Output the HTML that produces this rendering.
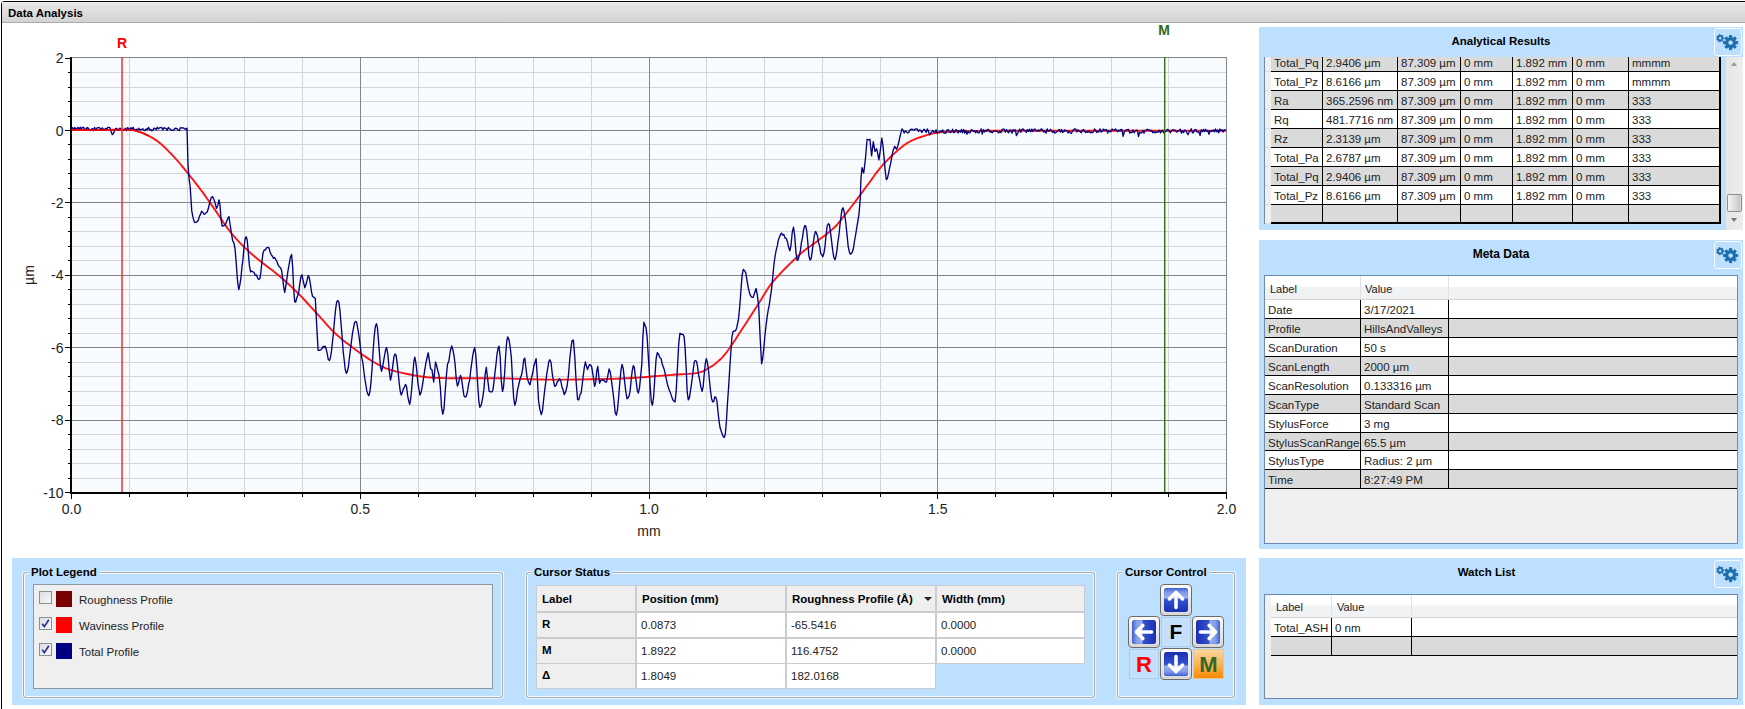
<!DOCTYPE html><html><head><meta charset="utf-8"><style>
*{box-sizing:border-box}
body{margin:0;width:1745px;height:709px;overflow:hidden;background:#fff;position:relative;font-family:"Liberation Sans",sans-serif;color:#1e1e1e}
.a{position:absolute}
.t{position:absolute;white-space:nowrap}
.panel{position:absolute;background:#bee0ff}
.ptitle{position:absolute;font-weight:bold;font-size:11.5px;color:#000;white-space:nowrap}
.gear{position:absolute;width:28px;height:28px;border:1px solid rgba(255,255,255,0.85);border-radius:3px}
.tbl{position:absolute;background:#efefef;border:1px solid #6a8cb3;overflow:hidden}
.row{position:absolute;height:19px;border-bottom:1px solid #000;}
.cell{position:absolute;top:0;height:18px;border-right:1px solid #000;font-size:11.5px;line-height:18px;padding-top:1px;padding-left:3px;white-space:nowrap;color:#222}
.gb{position:absolute;border:1px solid #a3a8ad;border-radius:3px;box-shadow:inset 0 0 0 1px rgba(255,255,255,0.9), 0 0 0 1px rgba(255,255,255,0.7)}
.gbt{position:absolute;font-weight:bold;font-size:11.5px;color:#000;background:#bee0ff;padding:0 3px;white-space:nowrap;line-height:14px}
.cs{position:absolute;background:#fff;border:1px solid #c9ccd0;font-size:11.5px;line-height:24px;padding-left:4px;white-space:nowrap;color:#222}
.csh{background:#efefef;font-weight:bold;font-size:11.5px;color:#000}
</style></head><body>
<div class="a" style="left:1px;top:1px;width:1760px;height:720px;border:1px solid #000;border-radius:3px 3px 0 0"></div>
<div class="a" style="left:2px;top:2px;width:1743px;height:21px;background:linear-gradient(#f2f2f2 0px,#e6e6e6 2px,#d3d3d3 20px);border-bottom:1px solid #ababab"></div>
<div class="t" style="left:8px;top:6px;font-weight:bold;font-size:11.5px;color:#000;line-height:14px">Data Analysis</div>
<svg width="1250" height="530" viewBox="0 0 1250 530" style="position:absolute;left:0;top:0" shape-rendering="crispEdges">
<rect x="71" y="57" width="1156" height="435" fill="#f8fbfe"/>
<line x1="71" x2="1226" y1="72.5" y2="72.5" stroke="#d4d4d4" stroke-width="1"/>
<line x1="71" x2="1226" y1="87.5" y2="87.5" stroke="#d4d4d4" stroke-width="1"/>
<line x1="71" x2="1226" y1="101.5" y2="101.5" stroke="#d4d4d4" stroke-width="1"/>
<line x1="71" x2="1226" y1="116.5" y2="116.5" stroke="#d4d4d4" stroke-width="1"/>
<line x1="71" x2="1226" y1="144.5" y2="144.5" stroke="#d4d4d4" stroke-width="1"/>
<line x1="71" x2="1226" y1="159.5" y2="159.5" stroke="#d4d4d4" stroke-width="1"/>
<line x1="71" x2="1226" y1="173.5" y2="173.5" stroke="#d4d4d4" stroke-width="1"/>
<line x1="71" x2="1226" y1="188.5" y2="188.5" stroke="#d4d4d4" stroke-width="1"/>
<line x1="71" x2="1226" y1="217.5" y2="217.5" stroke="#d4d4d4" stroke-width="1"/>
<line x1="71" x2="1226" y1="231.5" y2="231.5" stroke="#d4d4d4" stroke-width="1"/>
<line x1="71" x2="1226" y1="246.5" y2="246.5" stroke="#d4d4d4" stroke-width="1"/>
<line x1="71" x2="1226" y1="260.5" y2="260.5" stroke="#d4d4d4" stroke-width="1"/>
<line x1="71" x2="1226" y1="289.5" y2="289.5" stroke="#d4d4d4" stroke-width="1"/>
<line x1="71" x2="1226" y1="304.5" y2="304.5" stroke="#d4d4d4" stroke-width="1"/>
<line x1="71" x2="1226" y1="318.5" y2="318.5" stroke="#d4d4d4" stroke-width="1"/>
<line x1="71" x2="1226" y1="333.5" y2="333.5" stroke="#d4d4d4" stroke-width="1"/>
<line x1="71" x2="1226" y1="362.5" y2="362.5" stroke="#d4d4d4" stroke-width="1"/>
<line x1="71" x2="1226" y1="376.5" y2="376.5" stroke="#d4d4d4" stroke-width="1"/>
<line x1="71" x2="1226" y1="391.5" y2="391.5" stroke="#d4d4d4" stroke-width="1"/>
<line x1="71" x2="1226" y1="405.5" y2="405.5" stroke="#d4d4d4" stroke-width="1"/>
<line x1="71" x2="1226" y1="434.5" y2="434.5" stroke="#d4d4d4" stroke-width="1"/>
<line x1="71" x2="1226" y1="449.5" y2="449.5" stroke="#d4d4d4" stroke-width="1"/>
<line x1="71" x2="1226" y1="463.5" y2="463.5" stroke="#d4d4d4" stroke-width="1"/>
<line x1="71" x2="1226" y1="478.5" y2="478.5" stroke="#d4d4d4" stroke-width="1"/>
<line x1="129.5" x2="129.5" y1="57" y2="492" stroke="#d4d4d4" stroke-width="1"/>
<line x1="187.5" x2="187.5" y1="57" y2="492" stroke="#d4d4d4" stroke-width="1"/>
<line x1="244.5" x2="244.5" y1="57" y2="492" stroke="#d4d4d4" stroke-width="1"/>
<line x1="302.5" x2="302.5" y1="57" y2="492" stroke="#d4d4d4" stroke-width="1"/>
<line x1="418.5" x2="418.5" y1="57" y2="492" stroke="#d4d4d4" stroke-width="1"/>
<line x1="475.5" x2="475.5" y1="57" y2="492" stroke="#d4d4d4" stroke-width="1"/>
<line x1="533.5" x2="533.5" y1="57" y2="492" stroke="#d4d4d4" stroke-width="1"/>
<line x1="591.5" x2="591.5" y1="57" y2="492" stroke="#d4d4d4" stroke-width="1"/>
<line x1="706.5" x2="706.5" y1="57" y2="492" stroke="#d4d4d4" stroke-width="1"/>
<line x1="764.5" x2="764.5" y1="57" y2="492" stroke="#d4d4d4" stroke-width="1"/>
<line x1="822.5" x2="822.5" y1="57" y2="492" stroke="#d4d4d4" stroke-width="1"/>
<line x1="880.5" x2="880.5" y1="57" y2="492" stroke="#d4d4d4" stroke-width="1"/>
<line x1="995.5" x2="995.5" y1="57" y2="492" stroke="#d4d4d4" stroke-width="1"/>
<line x1="1053.5" x2="1053.5" y1="57" y2="492" stroke="#d4d4d4" stroke-width="1"/>
<line x1="1111.5" x2="1111.5" y1="57" y2="492" stroke="#d4d4d4" stroke-width="1"/>
<line x1="1168.5" x2="1168.5" y1="57" y2="492" stroke="#d4d4d4" stroke-width="1"/>
<line x1="71" x2="1226" y1="130.5" y2="130.5" stroke="#858585" stroke-width="1"/>
<line x1="71" x2="1226" y1="202.5" y2="202.5" stroke="#858585" stroke-width="1"/>
<line x1="71" x2="1226" y1="275.5" y2="275.5" stroke="#858585" stroke-width="1"/>
<line x1="71" x2="1226" y1="347.5" y2="347.5" stroke="#858585" stroke-width="1"/>
<line x1="71" x2="1226" y1="420.5" y2="420.5" stroke="#858585" stroke-width="1"/>
<line x1="360.5" x2="360.5" y1="57" y2="492" stroke="#858585" stroke-width="1"/>
<line x1="649.5" x2="649.5" y1="57" y2="492" stroke="#858585" stroke-width="1"/>
<line x1="937.5" x2="937.5" y1="57" y2="492" stroke="#858585" stroke-width="1"/>
<line x1="71" x2="1227" y1="57.5" y2="57.5" stroke="#858585"/>
<line x1="1226.5" x2="1226.5" y1="57" y2="492" stroke="#858585"/>
<rect x="70" y="57" width="2" height="437" fill="#000"/>
<rect x="70" y="492" width="1157" height="2" fill="#000"/>
<line x1="65" x2="70" y1="58.5" y2="58.5" stroke="#000"/>
<line x1="68" x2="70" y1="72.5" y2="72.5" stroke="#000"/>
<line x1="68" x2="70" y1="87.5" y2="87.5" stroke="#000"/>
<line x1="68" x2="70" y1="101.5" y2="101.5" stroke="#000"/>
<line x1="68" x2="70" y1="116.5" y2="116.5" stroke="#000"/>
<line x1="65" x2="70" y1="130.5" y2="130.5" stroke="#000"/>
<line x1="68" x2="70" y1="144.5" y2="144.5" stroke="#000"/>
<line x1="68" x2="70" y1="159.5" y2="159.5" stroke="#000"/>
<line x1="68" x2="70" y1="173.5" y2="173.5" stroke="#000"/>
<line x1="68" x2="70" y1="188.5" y2="188.5" stroke="#000"/>
<line x1="65" x2="70" y1="202.5" y2="202.5" stroke="#000"/>
<line x1="68" x2="70" y1="217.5" y2="217.5" stroke="#000"/>
<line x1="68" x2="70" y1="231.5" y2="231.5" stroke="#000"/>
<line x1="68" x2="70" y1="246.5" y2="246.5" stroke="#000"/>
<line x1="68" x2="70" y1="260.5" y2="260.5" stroke="#000"/>
<line x1="65" x2="70" y1="275.5" y2="275.5" stroke="#000"/>
<line x1="68" x2="70" y1="289.5" y2="289.5" stroke="#000"/>
<line x1="68" x2="70" y1="304.5" y2="304.5" stroke="#000"/>
<line x1="68" x2="70" y1="318.5" y2="318.5" stroke="#000"/>
<line x1="68" x2="70" y1="333.5" y2="333.5" stroke="#000"/>
<line x1="65" x2="70" y1="347.5" y2="347.5" stroke="#000"/>
<line x1="68" x2="70" y1="362.5" y2="362.5" stroke="#000"/>
<line x1="68" x2="70" y1="376.5" y2="376.5" stroke="#000"/>
<line x1="68" x2="70" y1="391.5" y2="391.5" stroke="#000"/>
<line x1="68" x2="70" y1="405.5" y2="405.5" stroke="#000"/>
<line x1="65" x2="70" y1="420.5" y2="420.5" stroke="#000"/>
<line x1="68" x2="70" y1="434.5" y2="434.5" stroke="#000"/>
<line x1="68" x2="70" y1="449.5" y2="449.5" stroke="#000"/>
<line x1="68" x2="70" y1="463.5" y2="463.5" stroke="#000"/>
<line x1="68" x2="70" y1="478.5" y2="478.5" stroke="#000"/>
<line x1="65" x2="70" y1="492.5" y2="492.5" stroke="#000"/>
<line x1="71.5" x2="71.5" y1="494" y2="499" stroke="#000"/>
<line x1="129.5" x2="129.5" y1="494" y2="497" stroke="#000"/>
<line x1="187.5" x2="187.5" y1="494" y2="497" stroke="#000"/>
<line x1="244.5" x2="244.5" y1="494" y2="497" stroke="#000"/>
<line x1="302.5" x2="302.5" y1="494" y2="497" stroke="#000"/>
<line x1="360.5" x2="360.5" y1="494" y2="499" stroke="#000"/>
<line x1="418.5" x2="418.5" y1="494" y2="497" stroke="#000"/>
<line x1="475.5" x2="475.5" y1="494" y2="497" stroke="#000"/>
<line x1="533.5" x2="533.5" y1="494" y2="497" stroke="#000"/>
<line x1="591.5" x2="591.5" y1="494" y2="497" stroke="#000"/>
<line x1="649.5" x2="649.5" y1="494" y2="499" stroke="#000"/>
<line x1="706.5" x2="706.5" y1="494" y2="497" stroke="#000"/>
<line x1="764.5" x2="764.5" y1="494" y2="497" stroke="#000"/>
<line x1="822.5" x2="822.5" y1="494" y2="497" stroke="#000"/>
<line x1="880.5" x2="880.5" y1="494" y2="497" stroke="#000"/>
<line x1="937.5" x2="937.5" y1="494" y2="499" stroke="#000"/>
<line x1="995.5" x2="995.5" y1="494" y2="497" stroke="#000"/>
<line x1="1053.5" x2="1053.5" y1="494" y2="497" stroke="#000"/>
<line x1="1111.5" x2="1111.5" y1="494" y2="497" stroke="#000"/>
<line x1="1168.5" x2="1168.5" y1="494" y2="497" stroke="#000"/>
<line x1="1226.5" x2="1226.5" y1="494" y2="499" stroke="#000"/>
</svg>
<svg width="1250" height="530" style="position:absolute;left:0;top:0"><defs><clipPath id="pc"><rect x="72" y="57" width="1155" height="435"/></clipPath></defs><g clip-path="url(#pc)"><polyline points="71.0,130.0 73.2,130.0 76.2,130.0 79.7,130.0 83.7,130.0 87.8,130.0 92.1,130.0 96.2,130.0 100.0,130.0 103.8,130.0 107.7,129.9 111.8,129.8 115.8,129.8 119.7,129.7 123.3,129.7 126.5,129.7 129.2,129.8 131.4,129.9 133.0,130.1 134.3,130.3 135.4,130.5 136.2,130.8 137.1,131.1 138.0,131.4 139.1,131.8 140.3,132.2 141.6,132.6 142.8,133.1 144.1,133.6 145.3,134.2 146.5,134.8 147.8,135.4 149.0,136.0 150.2,136.7 151.5,137.3 152.7,138.1 153.9,138.8 155.1,139.6 156.3,140.4 157.6,141.3 158.8,142.2 160.0,143.2 161.3,144.2 162.5,145.3 163.7,146.5 165.0,147.6 166.2,148.8 167.5,150.1 168.7,151.3 169.9,152.6 171.2,153.8 172.4,155.1 173.6,156.5 174.9,157.8 176.1,159.2 177.4,160.6 178.6,162.0 179.9,163.5 181.1,165.0 182.4,166.6 183.7,168.2 184.9,169.7 186.2,171.3 187.4,172.8 188.5,174.2 189.5,175.5 190.5,176.6 191.3,177.7 192.2,178.7 193.1,179.8 194.1,181.0 195.1,182.4 196.4,184.1 197.8,185.9 199.3,187.9 200.8,190.0 202.5,192.2 204.3,194.6 206.1,197.2 208.1,200.0 210.3,203.0 212.6,206.4 215.2,210.1 217.9,214.1 220.7,218.3 223.5,222.5 226.4,226.6 229.2,230.5 232.0,234.0 234.7,237.2 237.4,240.1 240.0,242.9 242.7,245.6 245.3,248.1 248.1,250.6 250.8,253.2 253.7,255.7 256.7,258.3 259.8,260.8 263.0,263.3 266.2,265.7 269.5,268.2 272.6,270.6 275.6,272.9 278.5,275.3 281.2,277.6 283.8,279.8 286.2,282.0 288.6,284.2 291.0,286.4 293.3,288.6 295.6,290.9 298.0,293.2 300.4,295.6 302.7,298.0 305.0,300.5 307.3,303.0 309.6,305.6 312.0,308.1 314.3,310.7 316.7,313.3 319.1,315.9 321.4,318.6 323.8,321.2 326.1,323.9 328.6,326.6 331.1,329.3 333.7,331.9 336.4,334.5 339.4,337.1 342.5,339.7 345.9,342.4 349.3,345.0 352.6,347.5 355.9,349.9 359.0,352.2 361.8,354.2 364.4,356.0 366.8,357.6 369.0,359.1 371.1,360.5 373.2,361.7 375.1,362.9 377.1,364.0 379.0,365.0 380.8,365.9 382.4,366.7 383.8,367.4 385.2,368.1 386.7,368.6 388.4,369.2 390.4,369.8 392.8,370.5 395.6,371.3 398.8,372.1 402.3,372.9 406.0,373.7 409.8,374.5 413.6,375.3 417.4,376.0 421.0,376.5 424.4,376.9 427.5,377.3 430.6,377.5 433.7,377.7 437.0,377.9 440.6,378.0 444.6,378.1 449.2,378.2 454.5,378.3 460.5,378.3 467.0,378.3 473.7,378.3 480.6,378.3 487.4,378.2 493.9,378.2 500.0,378.3 505.7,378.4 511.2,378.6 516.5,378.7 521.7,378.9 526.8,379.1 531.9,379.3 537.1,379.4 542.3,379.5 547.6,379.6 552.9,379.6 558.2,379.6 563.5,379.6 568.8,379.6 574.1,379.5 579.4,379.5 584.7,379.4 590.0,379.3 595.3,379.2 600.6,379.2 605.9,379.0 611.1,378.9 616.4,378.7 621.7,378.5 627.0,378.3 632.4,378.0 637.9,377.6 643.5,377.2 649.1,376.8 654.5,376.3 659.8,375.9 664.7,375.5 669.3,375.1 673.6,374.8 677.6,374.5 681.4,374.3 685.0,374.1 688.4,373.9 691.5,373.6 694.3,373.4 696.8,373.0 698.9,372.6 700.6,372.2 702.0,371.7 703.2,371.2 704.2,370.7 705.1,370.1 706.2,369.5 707.4,368.8 708.7,368.1 710.0,367.3 711.3,366.5 712.7,365.6 714.0,364.7 715.3,363.7 716.6,362.6 718.0,361.4 719.3,360.2 720.4,359.2 721.5,358.2 722.6,357.1 723.8,355.7 725.3,353.9 727.1,351.5 729.3,348.5 732.0,344.5 735.3,339.7 738.9,334.1 742.7,328.3 746.6,322.3 750.3,316.5 753.8,311.1 756.8,306.5 759.3,302.6 761.5,299.1 763.3,295.9 765.1,293.0 766.8,290.2 768.7,287.3 770.8,284.4 773.3,281.3 776.2,277.9 779.5,274.3 783.0,270.6 786.6,267.0 790.3,263.4 793.8,260.0 797.1,256.9 800.0,254.2 802.6,251.9 804.9,250.0 807.1,248.4 809.1,247.0 811.0,245.7 812.9,244.4 814.9,243.0 816.9,241.5 819.1,239.8 821.3,238.1 823.5,236.4 825.8,234.7 828.0,233.0 830.0,231.3 832.0,229.6 833.8,228.0 835.4,226.5 836.8,225.0 838.0,223.6 839.2,222.2 840.4,220.7 841.5,219.3 842.7,217.7 844.0,216.1 845.4,214.4 846.8,212.6 848.3,210.7 849.8,208.8 851.3,206.8 852.8,204.8 854.3,202.9 855.8,200.9 857.3,198.9 858.8,196.9 860.3,194.9 861.7,192.9 863.2,190.9 864.7,188.8 866.2,186.8 867.7,184.8 869.2,182.8 870.7,180.7 872.2,178.6 873.7,176.5 875.2,174.4 876.7,172.4 878.1,170.6 879.5,168.8 880.9,167.2 882.2,165.7 883.4,164.2 884.7,162.9 885.9,161.6 887.2,160.3 888.4,159.1 889.7,157.8 891.0,156.5 892.3,155.3 893.6,154.1 894.9,152.9 896.2,151.7 897.4,150.6 898.7,149.5 900.0,148.5 901.2,147.5 902.4,146.6 903.6,145.6 904.7,144.8 905.9,143.9 907.2,143.1 908.5,142.3 910.0,141.5 911.6,140.7 913.3,139.9 915.1,139.2 917.0,138.4 918.9,137.7 920.9,137.0 922.8,136.4 924.7,135.8 926.5,135.2 928.3,134.7 930.0,134.3 931.7,133.8 933.5,133.4 935.5,133.0 937.6,132.7 940.0,132.4 942.6,132.1 945.3,131.9 948.2,131.8 951.3,131.6 954.5,131.5 957.8,131.4 961.3,131.3 965.0,131.2 967.6,131.1 968.6,131.0 969.0,131.0 969.9,130.9 972.4,130.9 977.6,130.9 986.4,130.8 1000.0,130.8 1020.7,130.8 1048.4,130.8 1080.7,130.8 1115.2,130.8 1149.4,130.8 1180.9,130.8 1207.3,130.8 1226.0,130.8" fill="none" stroke="#ff1414" stroke-width="1.9" stroke-linejoin="round"/><polyline points="71.5,128.4 72.6,127.7 73.7,129.5 74.8,127.5 75.9,129.1 77.0,128.5 78.1,127.4 79.2,129.0 80.3,127.3 81.4,128.8 82.5,127.5 83.6,127.5 84.7,128.7 85.8,130.2 86.9,127.6 88.0,128.0 89.1,129.5 90.2,130.6 91.3,129.3 92.4,128.6 93.5,130.7 94.6,127.4 95.7,130.3 96.8,128.2 97.9,127.7 99.0,127.6 100.1,128.3 101.2,130.1 102.3,127.9 103.4,129.3 104.5,129.5 105.6,128.5 106.7,129.2 107.8,127.4 108.9,127.4 110.0,127.9 111.1,131.6 112.2,134.5 113.3,133.7 114.4,130.9 115.5,128.8 116.6,128.3 117.7,130.1 118.8,129.7 119.9,128.1 121.0,129.3 122.1,129.1 123.2,130.4 124.3,129.8 125.4,128.2 126.5,130.7 127.6,127.6 128.7,128.7 129.8,129.9 130.9,127.7 132.0,129.0 133.1,127.3 134.2,129.6 135.3,130.0 136.4,129.3 137.5,130.4 138.6,128.3 139.7,129.7 140.8,129.3 141.9,129.3 143.0,128.8 144.1,130.2 145.2,130.6 146.3,128.9 147.4,129.6 148.5,127.4 149.6,129.7 150.7,129.5 151.8,130.8 152.9,130.2 154.0,128.2 155.1,128.6 156.2,129.6 157.3,127.3 158.4,128.9 159.5,127.8 160.6,127.6 161.7,127.4 162.8,130.0 163.9,127.7 165.0,128.1 166.1,128.6 167.2,130.3 168.3,127.5 169.4,128.8 170.5,129.2 171.6,130.4 172.7,130.1 173.8,130.3 174.9,128.2 176.0,128.7 177.1,128.5 178.2,130.4 179.3,130.6 180.4,127.7 181.5,127.8 182.6,128.0 183.7,128.0 184.8,128.9 185.9,129.3 187.0,128.1 187.1,131.0 188.0,165.1 189.1,178.8 190.2,187.0 191.7,210.4 192.7,216.2 193.8,220.4 194.8,222.5 196.0,222.4 197.2,221.5 198.3,220.2 199.5,216.1 200.5,214.4 201.6,211.3 202.6,212.0 204.1,214.5 205.1,213.8 206.2,212.7 207.2,212.0 208.4,208.3 209.7,202.5 211.1,198.0 212.5,196.6 213.8,199.2 215.0,202.6 216.5,208.4 217.8,205.4 219.0,199.9 220.0,205.1 221.1,219.7 222.1,226.0 223.3,225.8 224.6,225.1 225.8,223.8 226.8,221.1 227.9,218.3 228.9,216.6 230.2,225.0 231.4,233.0 232.6,240.5 233.9,242.8 235.1,249.1 236.3,264.1 237.6,281.8 238.8,289.6 239.8,285.2 240.9,278.1 241.9,267.6 242.9,259.9 243.9,248.5 245.0,239.5 246.0,236.6 247.2,239.7 248.3,252.5 249.4,265.7 250.6,271.9 251.8,271.1 252.9,271.8 254.1,272.4 255.3,275.4 256.4,274.9 257.6,277.8 258.8,279.5 259.9,278.6 260.9,272.0 262.0,261.5 263.0,252.9 264.2,250.0 265.4,249.8 266.5,247.8 267.7,247.4 268.9,247.6 270.0,251.7 271.1,254.6 272.3,256.0 273.5,258.4 274.6,257.5 275.8,259.5 277.0,261.8 278.1,264.9 279.3,266.8 280.5,267.7 281.6,270.6 282.6,277.7 283.7,286.9 284.7,292.5 285.7,286.6 286.8,279.7 287.8,271.8 289.1,264.6 290.3,257.8 291.6,254.5 292.6,266.2 293.7,289.3 294.7,301.8 295.7,302.0 296.8,297.8 297.8,295.2 298.8,291.9 299.8,283.9 300.8,277.4 301.8,274.7 302.8,278.8 303.8,283.3 304.8,287.7 305.9,284.8 307.1,280.1 308.2,275.5 309.3,277.8 310.4,284.0 311.5,291.8 312.6,296.5 314.0,297.3 315.3,298.5 316.7,325.2 318.1,350.3 319.1,350.3 320.1,350.0 321.1,349.6 322.1,348.4 323.1,346.3 324.1,347.7 325.1,346.1 326.2,349.1 327.2,353.6 328.3,359.6 329.4,360.5 330.4,358.0 331.5,350.9 332.6,340.7 333.6,331.2 334.6,319.1 335.7,308.5 336.8,301.6 337.8,300.5 338.9,302.4 339.9,310.0 341.0,323.2 342.1,336.2 343.1,350.6 344.2,360.0 345.2,369.3 346.3,373.3 347.3,371.6 348.4,367.0 349.4,357.8 350.4,350.2 351.5,341.1 352.5,333.1 353.5,328.2 354.6,322.4 355.6,321.5 356.6,322.0 357.7,328.2 358.7,334.1 359.7,341.6 360.8,350.9 361.8,358.2 362.8,362.4 363.8,371.0 364.8,378.5 365.8,384.5 366.8,390.7 367.8,394.1 368.8,395.7 369.9,391.8 371.0,382.2 372.1,368.0 373.1,351.3 374.2,336.5 375.3,326.8 376.4,323.7 377.4,327.4 378.4,339.6 379.5,353.5 380.5,366.9 381.5,371.2 382.5,367.5 383.5,361.7 384.6,355.3 385.6,349.8 386.6,347.6 387.9,354.5 389.2,370.3 390.5,380.1 391.6,375.2 392.8,365.6 394.0,356.5 395.1,354.0 396.1,355.3 397.2,363.6 398.2,372.9 399.2,382.9 400.3,391.6 401.3,395.0 402.4,392.0 403.4,388.7 404.4,387.1 405.5,384.4 406.6,386.8 407.6,395.4 408.6,400.5 409.7,404.4 410.7,398.7 411.7,388.7 412.8,374.2 413.8,362.2 414.8,357.1 415.8,362.3 416.9,371.6 417.9,383.1 419.0,389.9 420.0,395.1 421.2,391.9 422.3,386.2 423.5,378.3 424.9,368.8 426.0,362.6 427.1,357.5 428.2,352.8 429.4,360.6 430.6,368.8 432.0,369.9 433.7,382.0 435.5,362.0 436.7,365.9 437.8,370.5 439.0,375.0 440.3,387.0 441.5,406.8 442.8,414.2 444.0,408.9 445.1,392.9 446.3,376.8 447.5,364.2 448.9,360.9 450.3,351.0 451.7,345.9 452.8,349.5 453.9,354.8 455.1,364.0 456.2,378.5 457.4,386.0 458.4,383.8 459.5,378.7 460.5,375.4 461.6,379.2 462.8,387.9 464.0,395.9 465.1,397.1 466.3,396.2 467.5,391.5 468.7,383.7 469.7,379.9 470.7,370.4 471.7,363.4 472.7,355.8 473.7,350.6 474.7,347.7 475.7,354.1 476.8,369.3 477.8,386.4 478.9,401.7 479.9,407.3 481.4,404.3 482.8,397.1 484.0,388.4 485.1,374.7 486.3,367.3 487.7,379.5 489.1,391.2 490.5,391.9 491.9,391.8 492.9,390.0 493.9,382.4 494.9,373.3 496.0,364.2 497.0,354.3 498.0,348.5 499.0,346.1 500.2,357.0 501.3,380.9 502.5,391.5 503.5,387.4 504.6,373.7 505.6,356.5 506.7,341.5 507.7,336.9 509.0,339.7 510.3,348.0 511.4,358.4 512.5,379.8 513.7,398.0 514.8,405.2 516.1,401.1 517.4,390.6 518.7,384.8 520.2,378.5 521.6,374.8 522.7,368.6 523.7,359.8 524.8,358.1 526.0,368.5 527.2,378.1 528.6,382.4 530.0,384.9 531.4,378.4 532.8,372.5 533.9,365.8 535.0,362.4 536.1,358.6 537.3,376.7 538.5,400.1 539.9,409.4 541.3,414.6 542.5,410.5 543.6,399.9 544.8,389.3 545.8,382.1 546.8,373.6 547.8,367.9 548.8,361.5 549.8,359.8 551.0,362.2 552.2,373.3 553.5,381.0 554.7,386.4 555.9,385.4 557.2,382.0 558.4,380.7 559.6,378.6 560.8,381.0 561.9,386.9 563.1,390.0 564.2,394.6 565.7,391.6 567.1,386.0 568.5,374.8 569.9,357.5 571.0,348.2 572.0,340.7 573.4,340.1 574.8,357.4 576.2,383.0 577.6,399.6 578.8,399.8 580.0,394.8 581.2,392.7 582.2,384.5 583.3,375.3 584.4,366.9 585.4,361.8 586.5,366.3 587.5,369.6 588.5,366.7 589.6,364.6 590.7,365.1 591.7,366.8 593.2,376.4 594.6,386.3 595.7,382.4 596.7,371.2 597.8,366.5 599.5,383.2 600.9,380.5 602.3,379.3 603.3,380.6 604.4,380.7 605.5,382.1 606.5,382.1 607.8,376.0 609.1,368.9 610.3,372.2 611.5,380.9 612.7,390.0 614.0,400.8 615.2,412.8 616.4,415.2 617.5,409.6 618.7,396.5 619.8,382.4 621.0,370.1 622.1,364.4 623.3,368.9 624.5,380.4 625.8,391.6 627.0,398.7 628.0,397.8 629.1,395.8 630.1,390.8 631.2,379.7 632.2,370.8 633.3,365.7 634.3,367.4 635.3,376.1 636.3,382.2 637.3,390.4 638.3,393.1 639.5,388.1 640.6,376.6 641.8,364.4 642.8,338.4 643.9,322.2 645.0,325.3 646.0,327.6 647.1,336.7 648.1,353.1 649.2,370.8 650.3,388.4 651.3,401.7 652.4,405.2 653.6,397.0 654.8,378.3 656.1,359.0 657.3,352.7 658.7,354.5 660.1,358.0 661.2,358.8 662.2,364.0 663.3,367.1 664.4,370.0 665.5,375.3 666.5,379.9 667.5,384.5 668.6,388.1 669.7,391.3 670.7,393.6 671.8,396.9 672.9,399.9 673.9,401.1 675.0,402.0 676.2,391.1 677.5,366.6 678.7,344.1 679.9,333.2 681.0,334.3 682.0,334.2 683.0,334.4 684.1,336.6 685.1,348.3 686.2,368.6 687.2,392.2 688.3,399.8 689.3,398.2 690.3,392.2 691.3,385.4 692.4,377.0 693.4,368.4 694.4,361.4 695.4,360.5 696.5,361.2 697.5,366.2 698.5,374.4 699.6,379.5 700.9,387.1 702.1,391.4 703.1,387.1 704.2,374.5 705.2,364.2 706.3,358.7 707.4,362.4 708.4,369.5 709.5,381.0 710.6,391.3 711.6,398.8 712.7,401.9 713.8,401.3 714.8,396.8 715.9,397.4 716.9,400.9 718.0,411.7 719.0,420.7 720.1,427.8 721.1,430.9 722.2,434.1 723.2,436.4 724.3,437.4 725.4,433.5 726.5,419.7 727.5,402.9 728.6,387.4 729.7,369.5 730.8,352.8 731.9,337.3 733.0,331.7 734.2,331.0 735.5,330.8 736.7,327.9 738.5,319.0 739.7,306.7 740.9,290.9 742.1,275.1 743.3,269.5 744.5,270.5 745.8,272.8 747.0,280.3 748.3,287.8 749.5,292.7 750.7,295.9 752.0,297.4 753.2,297.3 754.7,292.6 756.1,288.4 757.4,295.6 758.7,306.2 760.2,338.6 761.6,363.8 762.7,358.3 763.8,348.3 764.9,335.6 766.0,326.0 767.1,317.2 768.2,310.1 769.3,304.9 770.4,296.6 771.5,289.6 772.7,277.7 774.0,263.8 775.2,255.5 776.2,250.1 777.3,245.9 778.3,240.2 779.3,237.5 780.4,234.7 781.4,233.0 782.6,235.1 783.8,234.4 785.0,238.0 786.2,238.3 787.4,241.7 788.6,247.0 789.8,250.9 791.0,245.5 792.3,231.8 793.5,227.1 794.7,235.9 796.0,253.1 797.2,260.4 798.2,259.6 799.3,255.2 800.4,250.7 801.4,242.6 802.5,237.7 803.5,230.3 804.6,226.0 805.6,225.7 806.7,230.8 807.8,242.2 808.9,255.9 810.0,260.1 811.1,258.9 812.2,251.4 813.3,242.9 814.4,235.2 815.5,231.4 816.5,233.0 817.6,236.6 818.6,242.9 819.7,246.3 820.7,253.4 821.8,254.8 822.8,256.7 823.9,253.3 825.0,246.3 826.1,235.0 827.2,226.0 828.3,223.7 829.4,224.7 830.5,232.1 831.6,241.1 832.7,250.5 833.8,257.2 834.9,259.7 835.9,256.7 836.9,250.8 837.9,242.2 839.0,234.5 840.0,224.7 841.0,216.6 842.0,209.3 843.0,207.8 844.0,211.3 845.1,217.5 846.1,225.5 847.2,236.4 848.2,246.7 849.3,251.7 850.3,254.2 851.4,253.5 852.4,251.8 853.5,248.0 854.5,241.0 855.6,235.0 856.6,228.7 857.7,222.2 859.0,214.1 860.3,198.1 860.9,179.4 862.0,167.7 863.7,173.1 865.4,159.0 867.1,139.3 868.8,139.8 869.9,139.3 871.6,155.8 873.3,141.6 875.0,151.3 876.7,148.8 877.8,154.2 878.9,159.8 880.3,150.3 881.8,138.2 882.9,145.0 884.0,156.9 885.1,169.9 886.3,179.5 887.4,178.4 888.6,173.2 889.7,167.4 890.8,162.6 891.9,156.5 893.0,150.7 894.7,146.3 896.4,149.1 897.5,147.0 898.7,142.5 899.9,136.8 901.0,132.6" fill="none" stroke="#000080" stroke-width="1.35" stroke-linejoin="round"/><polyline points="901.0,132.6 902.0,128.8 903.1,130.4 904.2,133.0 905.3,131.1 906.4,131.8 907.5,132.8 908.6,132.6 909.7,130.5 910.8,129.3 911.9,129.1 913.0,129.7 914.1,130.3 915.2,128.8 916.3,129.2 917.4,128.9 918.5,131.5 919.6,129.9 920.7,130.4 921.8,132.5 922.9,130.9 924.0,129.2 925.1,130.3 926.2,132.4 927.3,128.9 928.4,131.1 929.5,134.8 930.6,133.1 931.7,131.9 932.8,130.4 933.9,132.2 935.0,132.2 936.1,129.8 937.2,133.1 938.3,132.3 939.4,132.1 940.5,131.1 941.6,131.8 942.7,129.9 943.8,133.0 944.9,132.9 946.0,133.0 947.1,129.8 948.2,129.7 949.3,131.5 950.4,132.5 951.5,131.7 952.6,129.2 953.7,132.8 954.8,132.1 955.9,129.6 957.0,130.3 958.1,133.1 959.2,130.6 960.3,132.0 961.4,129.4 962.5,132.8 963.6,129.4 964.7,133.1 965.8,130.3 966.9,134.3 968.0,131.7 969.1,132.9 970.2,132.6 971.3,129.7 972.4,130.1 973.5,131.4 974.6,130.6 975.7,132.8 976.8,130.8 977.9,132.8 979.0,132.8 980.1,131.1 981.2,128.9 982.3,134.0 983.4,129.6 984.5,132.0 985.6,130.2 986.7,131.2 987.8,129.3 988.9,129.9 990.0,132.2 991.1,131.3 992.2,132.8 993.3,131.5 994.4,131.1 995.5,130.8 996.6,130.9 997.7,131.9 998.8,132.9 999.9,131.3 1001.0,132.5 1002.1,129.3 1003.2,129.1 1004.3,129.1 1005.4,132.2 1006.5,129.5 1007.6,131.7 1008.7,132.7 1009.8,129.8 1010.9,130.6 1012.0,133.2 1013.1,129.5 1014.2,131.1 1015.3,129.7 1016.4,135.6 1017.5,133.7 1018.6,131.5 1019.7,129.1 1020.8,132.3 1021.9,129.3 1023.0,129.0 1024.1,130.0 1025.2,130.7 1026.3,132.4 1027.4,129.5 1028.5,131.3 1029.6,129.2 1030.7,131.8 1031.8,129.1 1032.9,131.6 1034.0,129.2 1035.1,129.1 1036.2,130.8 1037.3,131.2 1038.4,130.0 1039.5,131.1 1040.6,129.3 1041.7,129.0 1042.8,130.2 1043.9,132.1 1045.0,131.0 1046.1,133.1 1047.2,128.9 1048.3,131.2 1049.4,130.9 1050.5,129.3 1051.6,130.7 1052.7,132.5 1053.8,131.0 1054.9,133.1 1056.0,132.5 1057.1,131.6 1058.2,130.3 1059.3,129.4 1060.4,132.1 1061.5,129.5 1062.6,132.5 1063.7,131.8 1064.8,129.9 1065.9,130.8 1067.0,130.8 1068.1,133.0 1069.2,131.2 1070.3,133.0 1071.4,133.5 1072.5,130.9 1073.6,129.7 1074.7,128.8 1075.8,129.2 1076.9,131.9 1078.0,129.8 1079.1,131.1 1080.2,131.7 1081.3,132.7 1082.4,130.2 1083.5,129.5 1084.6,131.6 1085.7,132.5 1086.8,131.6 1087.9,132.4 1089.0,131.1 1090.1,132.5 1091.2,132.4 1092.3,132.7 1093.4,131.9 1094.5,128.9 1095.6,130.4 1096.7,132.5 1097.8,131.6 1098.9,131.8 1100.0,128.8 1101.1,132.1 1102.2,131.2 1103.3,129.1 1104.4,129.9 1105.5,130.0 1106.6,129.7 1107.7,133.1 1108.8,130.5 1109.9,131.8 1111.0,131.5 1112.1,129.1 1113.2,129.9 1114.3,130.1 1115.4,128.9 1116.5,130.0 1117.6,131.8 1118.7,130.1 1119.8,130.8 1120.9,129.3 1122.0,129.7 1123.1,136.3 1124.2,132.4 1125.3,130.8 1126.4,129.7 1127.5,129.7 1128.6,129.4 1129.7,133.0 1130.8,132.4 1131.9,132.7 1133.0,129.8 1134.1,132.9 1135.2,131.0 1136.3,130.1 1137.4,130.3 1138.5,136.7 1139.6,132.5 1140.7,132.9 1141.8,132.8 1142.9,130.4 1144.0,133.2 1145.1,130.4 1146.2,130.0 1147.3,129.2 1148.4,130.1 1149.5,129.9 1150.6,131.0 1151.7,130.4 1152.8,132.7 1153.9,131.6 1155.0,132.9 1156.1,132.0 1157.2,132.0 1158.3,132.1 1159.4,130.1 1160.5,132.9 1161.6,130.9 1162.7,130.1 1163.8,133.1 1164.9,131.7 1166.0,131.3 1167.1,129.5 1168.2,129.7 1169.3,131.0 1170.4,132.8 1171.5,130.8 1172.6,129.6 1173.7,130.3 1174.8,129.9 1175.9,131.3 1177.0,132.1 1178.1,130.6 1179.2,130.5 1180.3,129.1 1181.4,133.1 1182.5,131.0 1183.6,132.6 1184.7,130.0 1185.8,130.6 1186.9,133.0 1188.0,134.7 1189.1,131.9 1190.2,130.9 1191.3,128.8 1192.4,132.9 1193.5,132.6 1194.6,129.9 1195.7,129.5 1196.8,131.8 1197.9,132.0 1199.0,132.2 1200.1,135.6 1201.2,129.8 1202.3,131.6 1203.4,129.4 1204.5,131.6 1205.6,129.3 1206.7,131.1 1207.8,130.5 1208.9,134.3 1210.0,130.8 1211.1,131.6 1212.2,130.9 1213.3,129.9 1214.4,131.9 1215.5,128.9 1216.6,131.8 1217.7,129.9 1218.8,132.9 1219.9,129.0 1221.0,130.7 1222.1,129.7 1223.2,132.1 1224.3,129.7 1225.4,130.2 1226.0,130.5" fill="none" stroke="#000080" stroke-width="1.3" stroke-linejoin="round"/><polyline points="71.0,130.0 73.2,130.0 76.2,130.0 79.7,130.0 83.7,130.0 87.8,130.0 92.1,130.0 96.2,130.0 100.0,130.0 103.8,130.0 107.7,129.9 111.8,129.8 115.8,129.8 119.7,129.7 123.3,129.7 126.5,129.7 129.2,129.8 131.4,129.9 133.0,130.1 134.3,130.3 135.4,130.5 136.2,130.8 137.1,131.1 138.0,131.4 139.1,131.8 140.3,132.2 141.6,132.6 142.8,133.1 144.1,133.6 145.3,134.2 146.5,134.8 147.8,135.4 149.0,136.0" fill="none" stroke="#ff0000" stroke-opacity="0.7" stroke-width="1.8" stroke-linejoin="round"/></g><rect x="121" y="57" width="2" height="435" fill="#ff2a2a" fill-opacity="0.75"/><rect x="1164" y="57" width="1.4" height="435" fill="#33700e"/></svg>
<div class="t" style="right:1681.5px;top:50.1px;font-size:14px;line-height:16px;color:#222">2</div>
<div class="t" style="right:1681.5px;top:122.5px;font-size:14px;line-height:16px;color:#222">0</div>
<div class="t" style="right:1681.5px;top:194.9px;font-size:14px;line-height:16px;color:#222">-2</div>
<div class="t" style="right:1681.5px;top:267.3px;font-size:14px;line-height:16px;color:#222">-4</div>
<div class="t" style="right:1681.5px;top:339.7px;font-size:14px;line-height:16px;color:#222">-6</div>
<div class="t" style="right:1681.5px;top:412.1px;font-size:14px;line-height:16px;color:#222">-8</div>
<div class="t" style="right:1681.5px;top:484.5px;font-size:14px;line-height:16px;color:#222">-10</div>
<div class="t" style="left:31.5px;width:80px;text-align:center;top:501px;font-size:14px;line-height:16px;color:#222">0.0</div>
<div class="t" style="left:320.2px;width:80px;text-align:center;top:501px;font-size:14px;line-height:16px;color:#222">0.5</div>
<div class="t" style="left:609.0px;width:80px;text-align:center;top:501px;font-size:14px;line-height:16px;color:#222">1.0</div>
<div class="t" style="left:897.8px;width:80px;text-align:center;top:501px;font-size:14px;line-height:16px;color:#222">1.5</div>
<div class="t" style="left:1186.5px;width:80px;text-align:center;top:501px;font-size:14px;line-height:16px;color:#222">2.0</div>
<div class="t" style="left:609px;width:80px;text-align:center;top:523px;font-size:14px;line-height:16px;color:#222">mm</div>
<div class="t" style="left:18.5px;top:266px;width:20px;height:18px;font-size:14px;line-height:18px;color:#222;transform:rotate(-90deg);text-align:center">&#181;m</div>
<div class="t" style="left:102px;width:40px;text-align:center;top:35.5px;font-weight:bold;font-size:14px;line-height:15px;color:#f00">R</div>
<div class="t" style="left:1144px;width:40px;text-align:center;top:22.5px;font-weight:bold;font-size:14px;line-height:15px;color:#336b12">M</div>
<div class="panel" style="left:1259px;top:27px;width:484px;height:203px"></div>
<div class="ptitle" style="left:1259px;width:484px;text-align:center;top:34px;line-height:14px">Analytical Results</div>
<div class="gear" style="left:1714px;top:28px"></div>
<svg class="a" style="left:1714px;top:28px" width="28" height="28" viewBox="0 0 28 28">
<g fill="#1a6cab" stroke="#1a6cab" stroke-width="0.9" stroke-linejoin="round">
<g transform="translate(6.2,10.2)"><path d="M2.50,-0.71 L3.54,-0.67 L3.54,0.67 L2.50,0.71 L2.12,1.51 L2.73,2.34 L1.68,3.19 L1.00,2.40 L0.14,2.60 L-0.13,3.60 L-1.44,3.30 L-1.25,2.28 L-1.94,1.73 L-2.89,2.14 L-3.48,0.93 L-2.56,0.44 L-2.56,-0.44 L-3.48,-0.93 L-2.89,-2.14 L-1.94,-1.73 L-1.25,-2.28 L-1.44,-3.30 L-0.13,-3.60 L0.14,-2.60 L1.00,-2.40 L1.68,-3.19 L2.73,-2.34 L2.12,-1.51Z M1.75,0 A1.75,1.75 0 1,0 -1.75,0 A1.75,1.75 0 1,0 1.75,0Z" fill-rule="evenodd"/></g>
<g transform="translate(16.6,14.6)"><path d="M4.85,-1.21 L7.10,-1.18 L7.10,1.18 L4.85,1.21 L4.28,2.58 L5.86,4.19 L4.19,5.86 L2.58,4.28 L1.21,4.85 L1.18,7.10 L-1.18,7.10 L-1.21,4.85 L-2.58,4.28 L-4.19,5.86 L-5.86,4.19 L-4.28,2.58 L-4.85,1.21 L-7.10,1.18 L-7.10,-1.18 L-4.85,-1.21 L-4.28,-2.58 L-5.86,-4.19 L-4.19,-5.86 L-2.58,-4.28 L-1.21,-4.85 L-1.18,-7.10 L1.18,-7.10 L1.21,-4.85 L2.58,-4.28 L4.19,-5.86 L5.86,-4.19 L4.28,-2.58Z M2.7,0 A2.7,2.7 0 1,0 -2.7,0 A2.7,2.7 0 1,0 2.7,0Z" fill-rule="evenodd"/></g>
</g></svg>
<div class="a" style="left:1264px;top:57px;width:462px;height:167px;overflow:hidden">
<div class="a" style="left:0;top:0;width:1px;height:167px;background:#6a8cb3"></div>
<div class="a" style="left:1px;top:0;width:6px;height:167px;background:#f0f0f0"></div>
<div class="a" style="left:7px;top:-4px;width:449px;height:19px;background:#dadada;border-bottom:1px solid #000"></div>
<div class="a" style="left:1px;top:14px;width:6px;height:1px;background:#dcdcdc"></div>
<div class="cell" style="left:7px;top:-4px;width:52px">Total_Pq</div>
<div class="cell" style="left:59px;top:-4px;width:75px">2.9406 µm</div>
<div class="cell" style="left:134px;top:-4px;width:63px">87.309 µm</div>
<div class="cell" style="left:197px;top:-4px;width:52px">0 mm</div>
<div class="cell" style="left:249px;top:-4px;width:60px">1.892 mm</div>
<div class="cell" style="left:309px;top:-4px;width:56px">0 mm</div>
<div class="cell" style="left:365px;top:-4px;width:91px">mmmm</div>
<div class="a" style="left:7px;top:15px;width:449px;height:19px;background:#fff;border-bottom:1px solid #000"></div>
<div class="a" style="left:1px;top:33px;width:6px;height:1px;background:#dcdcdc"></div>
<div class="cell" style="left:7px;top:15px;width:52px">Total_Pz</div>
<div class="cell" style="left:59px;top:15px;width:75px">8.6166 µm</div>
<div class="cell" style="left:134px;top:15px;width:63px">87.309 µm</div>
<div class="cell" style="left:197px;top:15px;width:52px">0 mm</div>
<div class="cell" style="left:249px;top:15px;width:60px">1.892 mm</div>
<div class="cell" style="left:309px;top:15px;width:56px">0 mm</div>
<div class="cell" style="left:365px;top:15px;width:91px">mmmm</div>
<div class="a" style="left:7px;top:34px;width:449px;height:19px;background:#dadada;border-bottom:1px solid #000"></div>
<div class="a" style="left:1px;top:52px;width:6px;height:1px;background:#dcdcdc"></div>
<div class="cell" style="left:7px;top:34px;width:52px">Ra</div>
<div class="cell" style="left:59px;top:34px;width:75px">365.2596 nm</div>
<div class="cell" style="left:134px;top:34px;width:63px">87.309 µm</div>
<div class="cell" style="left:197px;top:34px;width:52px">0 mm</div>
<div class="cell" style="left:249px;top:34px;width:60px">1.892 mm</div>
<div class="cell" style="left:309px;top:34px;width:56px">0 mm</div>
<div class="cell" style="left:365px;top:34px;width:91px">333</div>
<div class="a" style="left:7px;top:53px;width:449px;height:19px;background:#fff;border-bottom:1px solid #000"></div>
<div class="a" style="left:1px;top:71px;width:6px;height:1px;background:#dcdcdc"></div>
<div class="cell" style="left:7px;top:53px;width:52px">Rq</div>
<div class="cell" style="left:59px;top:53px;width:75px">481.7716 nm</div>
<div class="cell" style="left:134px;top:53px;width:63px">87.309 µm</div>
<div class="cell" style="left:197px;top:53px;width:52px">0 mm</div>
<div class="cell" style="left:249px;top:53px;width:60px">1.892 mm</div>
<div class="cell" style="left:309px;top:53px;width:56px">0 mm</div>
<div class="cell" style="left:365px;top:53px;width:91px">333</div>
<div class="a" style="left:7px;top:72px;width:449px;height:19px;background:#dadada;border-bottom:1px solid #000"></div>
<div class="a" style="left:1px;top:90px;width:6px;height:1px;background:#dcdcdc"></div>
<div class="cell" style="left:7px;top:72px;width:52px">Rz</div>
<div class="cell" style="left:59px;top:72px;width:75px">2.3139 µm</div>
<div class="cell" style="left:134px;top:72px;width:63px">87.309 µm</div>
<div class="cell" style="left:197px;top:72px;width:52px">0 mm</div>
<div class="cell" style="left:249px;top:72px;width:60px">1.892 mm</div>
<div class="cell" style="left:309px;top:72px;width:56px">0 mm</div>
<div class="cell" style="left:365px;top:72px;width:91px">333</div>
<div class="a" style="left:7px;top:91px;width:449px;height:19px;background:#fff;border-bottom:1px solid #000"></div>
<div class="a" style="left:1px;top:109px;width:6px;height:1px;background:#dcdcdc"></div>
<div class="cell" style="left:7px;top:91px;width:52px">Total_Pa</div>
<div class="cell" style="left:59px;top:91px;width:75px">2.6787 µm</div>
<div class="cell" style="left:134px;top:91px;width:63px">87.309 µm</div>
<div class="cell" style="left:197px;top:91px;width:52px">0 mm</div>
<div class="cell" style="left:249px;top:91px;width:60px">1.892 mm</div>
<div class="cell" style="left:309px;top:91px;width:56px">0 mm</div>
<div class="cell" style="left:365px;top:91px;width:91px">333</div>
<div class="a" style="left:7px;top:110px;width:449px;height:19px;background:#dadada;border-bottom:1px solid #000"></div>
<div class="a" style="left:1px;top:128px;width:6px;height:1px;background:#dcdcdc"></div>
<div class="cell" style="left:7px;top:110px;width:52px">Total_Pq</div>
<div class="cell" style="left:59px;top:110px;width:75px">2.9406 µm</div>
<div class="cell" style="left:134px;top:110px;width:63px">87.309 µm</div>
<div class="cell" style="left:197px;top:110px;width:52px">0 mm</div>
<div class="cell" style="left:249px;top:110px;width:60px">1.892 mm</div>
<div class="cell" style="left:309px;top:110px;width:56px">0 mm</div>
<div class="cell" style="left:365px;top:110px;width:91px">333</div>
<div class="a" style="left:7px;top:129px;width:449px;height:19px;background:#fff;border-bottom:1px solid #000"></div>
<div class="a" style="left:1px;top:147px;width:6px;height:1px;background:#dcdcdc"></div>
<div class="cell" style="left:7px;top:129px;width:52px">Total_Pz</div>
<div class="cell" style="left:59px;top:129px;width:75px">8.6166 µm</div>
<div class="cell" style="left:134px;top:129px;width:63px">87.309 µm</div>
<div class="cell" style="left:197px;top:129px;width:52px">0 mm</div>
<div class="cell" style="left:249px;top:129px;width:60px">1.892 mm</div>
<div class="cell" style="left:309px;top:129px;width:56px">0 mm</div>
<div class="cell" style="left:365px;top:129px;width:91px">333</div>
<div class="a" style="left:7px;top:148px;width:449px;height:19px;background:#dadada;border-bottom:1px solid #000"></div>
<div class="a" style="left:1px;top:166px;width:6px;height:1px;background:#dcdcdc"></div>
<div class="cell" style="left:7px;top:148px;width:52px"></div>
<div class="cell" style="left:59px;top:148px;width:75px"></div>
<div class="cell" style="left:134px;top:148px;width:63px"></div>
<div class="cell" style="left:197px;top:148px;width:52px"></div>
<div class="cell" style="left:249px;top:148px;width:60px"></div>
<div class="cell" style="left:309px;top:148px;width:56px"></div>
<div class="cell" style="left:365px;top:148px;width:91px"></div>
<div class="a" style="left:455px;top:0;width:2px;height:167px;background:#000"></div>
<div class="a" style="left:7px;top:165px;width:450px;height:2px;background:#000"></div>
</div>
<div class="a" style="left:1726px;top:57px;width:17px;height:173px;background:linear-gradient(90deg,#e6e6e6,#ededed)"></div>
<div class="a" style="left:1731px;top:62px;width:0;height:0;border-left:3.5px solid transparent;border-right:3.5px solid transparent;border-bottom:4px solid #9a9a9a"></div>
<div class="a" style="left:1731px;top:218px;width:0;height:0;border-left:3.5px solid transparent;border-right:3.5px solid transparent;border-top:4px solid #777"></div>
<div class="a" style="left:1727px;top:194px;width:15px;height:18px;border:1px solid #8f8f8f;border-radius:2px;background:linear-gradient(90deg,#f4f4f4,#dcdcdc 50%,#c8c8c8 90%,#e4e4e4)"></div>
<div class="panel" style="left:1259px;top:240px;width:484px;height:309px"></div>
<div class="ptitle" style="left:1259px;width:484px;text-align:center;top:246.5px;line-height:14px;font-size:12px">Meta Data</div>
<div class="gear" style="left:1714px;top:241px"></div>
<svg class="a" style="left:1714px;top:241px" width="28" height="28" viewBox="0 0 28 28">
<g fill="#1a6cab" stroke="#1a6cab" stroke-width="0.9" stroke-linejoin="round">
<g transform="translate(6.2,10.2)"><path d="M2.50,-0.71 L3.54,-0.67 L3.54,0.67 L2.50,0.71 L2.12,1.51 L2.73,2.34 L1.68,3.19 L1.00,2.40 L0.14,2.60 L-0.13,3.60 L-1.44,3.30 L-1.25,2.28 L-1.94,1.73 L-2.89,2.14 L-3.48,0.93 L-2.56,0.44 L-2.56,-0.44 L-3.48,-0.93 L-2.89,-2.14 L-1.94,-1.73 L-1.25,-2.28 L-1.44,-3.30 L-0.13,-3.60 L0.14,-2.60 L1.00,-2.40 L1.68,-3.19 L2.73,-2.34 L2.12,-1.51Z M1.75,0 A1.75,1.75 0 1,0 -1.75,0 A1.75,1.75 0 1,0 1.75,0Z" fill-rule="evenodd"/></g>
<g transform="translate(16.6,14.6)"><path d="M4.85,-1.21 L7.10,-1.18 L7.10,1.18 L4.85,1.21 L4.28,2.58 L5.86,4.19 L4.19,5.86 L2.58,4.28 L1.21,4.85 L1.18,7.10 L-1.18,7.10 L-1.21,4.85 L-2.58,4.28 L-4.19,5.86 L-5.86,4.19 L-4.28,2.58 L-4.85,1.21 L-7.10,1.18 L-7.10,-1.18 L-4.85,-1.21 L-4.28,-2.58 L-5.86,-4.19 L-4.19,-5.86 L-2.58,-4.28 L-1.21,-4.85 L-1.18,-7.10 L1.18,-7.10 L1.21,-4.85 L2.58,-4.28 L4.19,-5.86 L5.86,-4.19 L4.28,-2.58Z M2.7,0 A2.7,2.7 0 1,0 -2.7,0 A2.7,2.7 0 1,0 2.7,0Z" fill-rule="evenodd"/></g>
</g></svg>
<div class="tbl" style="left:1264px;top:275px;width:474px;height:269px"></div>
<div class="a" style="left:1265px;top:276px;width:472px;height:24px;background:linear-gradient(#fff 0,#fff 45%,#f1f2f4 50%,#f1f2f4 100%);border-bottom:1px solid #d5d5d5"></div>
<div class="a" style="left:1360px;top:276px;width:1px;height:23px;background:#e2e2e2"></div>
<div class="a" style="left:1448px;top:276px;width:1px;height:23px;background:#e2e2e2"></div>
<div class="t" style="left:1270px;top:282px;font-size:11px;line-height:14px;color:#222">Label</div>
<div class="t" style="left:1365px;top:282px;font-size:11px;line-height:14px;color:#222">Value</div>
<div class="a" style="left:1265px;top:300px;width:472px;height:19px;background:#fff;border-bottom:1px solid #000"></div>
<div class="cell" style="left:1265px;top:300px;width:96px;height:18px">Date</div>
<div class="cell" style="left:1361px;top:300px;width:88px;height:18px">3/17/2021</div>
<div class="a" style="left:1265px;top:319px;width:472px;height:19px;background:#dadada;border-bottom:1px solid #000"></div>
<div class="cell" style="left:1265px;top:319px;width:96px;height:18px">Profile</div>
<div class="cell" style="left:1361px;top:319px;width:88px;height:18px">HillsAndValleys</div>
<div class="a" style="left:1265px;top:338px;width:472px;height:19px;background:#fff;border-bottom:1px solid #000"></div>
<div class="cell" style="left:1265px;top:338px;width:96px;height:18px">ScanDuration</div>
<div class="cell" style="left:1361px;top:338px;width:88px;height:18px">50 s</div>
<div class="a" style="left:1265px;top:357px;width:472px;height:19px;background:#dadada;border-bottom:1px solid #000"></div>
<div class="cell" style="left:1265px;top:357px;width:96px;height:18px">ScanLength</div>
<div class="cell" style="left:1361px;top:357px;width:88px;height:18px">2000 µm</div>
<div class="a" style="left:1265px;top:376px;width:472px;height:19px;background:#fff;border-bottom:1px solid #000"></div>
<div class="cell" style="left:1265px;top:376px;width:96px;height:18px">ScanResolution</div>
<div class="cell" style="left:1361px;top:376px;width:88px;height:18px">0.133316 µm</div>
<div class="a" style="left:1265px;top:395px;width:472px;height:19px;background:#dadada;border-bottom:1px solid #000"></div>
<div class="cell" style="left:1265px;top:395px;width:96px;height:18px">ScanType</div>
<div class="cell" style="left:1361px;top:395px;width:88px;height:18px">Standard Scan</div>
<div class="a" style="left:1265px;top:414px;width:472px;height:19px;background:#fff;border-bottom:1px solid #000"></div>
<div class="cell" style="left:1265px;top:414px;width:96px;height:18px">StylusForce</div>
<div class="cell" style="left:1361px;top:414px;width:88px;height:18px">3 mg</div>
<div class="a" style="left:1265px;top:433px;width:472px;height:18px;background:#dadada;border-bottom:1px solid #000"></div>
<div class="cell" style="left:1265px;top:433px;width:96px;height:17px">StylusScanRange</div>
<div class="cell" style="left:1361px;top:433px;width:88px;height:17px">65.5 µm</div>
<div class="a" style="left:1265px;top:451px;width:472px;height:19px;background:#fff;border-bottom:1px solid #000"></div>
<div class="cell" style="left:1265px;top:451px;width:96px;height:18px">StylusType</div>
<div class="cell" style="left:1361px;top:451px;width:88px;height:18px">Radius: 2 µm</div>
<div class="a" style="left:1265px;top:470px;width:472px;height:19px;background:#dadada;border-bottom:1px solid #000"></div>
<div class="cell" style="left:1265px;top:470px;width:96px;height:18px">Time</div>
<div class="cell" style="left:1361px;top:470px;width:88px;height:18px">8:27:49 PM</div>
<div class="panel" style="left:1259px;top:558px;width:484px;height:147px"></div>
<div class="ptitle" style="left:1259px;width:455px;text-align:center;top:565px;line-height:14px">Watch List</div>
<div class="gear" style="left:1714px;top:560px"></div>
<svg class="a" style="left:1714px;top:560px" width="28" height="28" viewBox="0 0 28 28">
<g fill="#1a6cab" stroke="#1a6cab" stroke-width="0.9" stroke-linejoin="round">
<g transform="translate(6.2,10.2)"><path d="M2.50,-0.71 L3.54,-0.67 L3.54,0.67 L2.50,0.71 L2.12,1.51 L2.73,2.34 L1.68,3.19 L1.00,2.40 L0.14,2.60 L-0.13,3.60 L-1.44,3.30 L-1.25,2.28 L-1.94,1.73 L-2.89,2.14 L-3.48,0.93 L-2.56,0.44 L-2.56,-0.44 L-3.48,-0.93 L-2.89,-2.14 L-1.94,-1.73 L-1.25,-2.28 L-1.44,-3.30 L-0.13,-3.60 L0.14,-2.60 L1.00,-2.40 L1.68,-3.19 L2.73,-2.34 L2.12,-1.51Z M1.75,0 A1.75,1.75 0 1,0 -1.75,0 A1.75,1.75 0 1,0 1.75,0Z" fill-rule="evenodd"/></g>
<g transform="translate(16.6,14.6)"><path d="M4.85,-1.21 L7.10,-1.18 L7.10,1.18 L4.85,1.21 L4.28,2.58 L5.86,4.19 L4.19,5.86 L2.58,4.28 L1.21,4.85 L1.18,7.10 L-1.18,7.10 L-1.21,4.85 L-2.58,4.28 L-4.19,5.86 L-5.86,4.19 L-4.28,2.58 L-4.85,1.21 L-7.10,1.18 L-7.10,-1.18 L-4.85,-1.21 L-4.28,-2.58 L-5.86,-4.19 L-4.19,-5.86 L-2.58,-4.28 L-1.21,-4.85 L-1.18,-7.10 L1.18,-7.10 L1.21,-4.85 L2.58,-4.28 L4.19,-5.86 L5.86,-4.19 L4.28,-2.58Z M2.7,0 A2.7,2.7 0 1,0 -2.7,0 A2.7,2.7 0 1,0 2.7,0Z" fill-rule="evenodd"/></g>
</g></svg>
<div class="tbl" style="left:1264px;top:594px;width:474px;height:105px"></div>
<div class="a" style="left:1265px;top:595px;width:6px;height:103px;background:#f0f0f0"></div>
<div class="a" style="left:1271px;top:595px;width:466px;height:23px;background:linear-gradient(#fff 0,#fff 45%,#f1f2f4 50%,#f1f2f4 100%);border-bottom:1px solid #d5d5d5"></div>
<div class="a" style="left:1331px;top:595px;width:1px;height:22px;background:#e2e2e2"></div>
<div class="a" style="left:1411px;top:595px;width:1px;height:22px;background:#e2e2e2"></div>
<div class="t" style="left:1276px;top:600px;font-size:11px;line-height:14px;color:#222">Label</div>
<div class="t" style="left:1337px;top:600px;font-size:11px;line-height:14px;color:#222">Value</div>
<div class="a" style="left:1271px;top:618px;width:466px;height:19px;background:#fff;border-bottom:1px solid #000"></div>
<div class="cell" style="left:1271px;top:618px;width:61px">Total_ASH</div>
<div class="cell" style="left:1332px;top:618px;width:80px">0 nm</div>
<div class="a" style="left:1271px;top:637px;width:466px;height:19px;background:#dadada;border-bottom:1px solid #000"></div>
<div class="cell" style="left:1271px;top:637px;width:61px"></div>
<div class="cell" style="left:1332px;top:637px;width:80px"></div>
<div class="panel" style="left:12px;top:558px;width:1234px;height:147px"></div>
<div class="gb" style="left:23px;top:572px;width:480px;height:126px"></div>
<div class="gbt" style="left:28px;top:565px">Plot Legend</div>
<div class="a" style="left:33px;top:584px;width:460px;height:105px;background:#efefef;border:1px solid #8c97a3"></div>
<div class="a" style="left:39px;top:591px;width:13px;height:13px;border:1px solid #8e8f8f;background:linear-gradient(135deg,#dcdfe3,#f6f7f8)"></div>
<div class="a" style="left:56px;top:591px;width:16px;height:16px;background:#7b0000"></div>
<div class="t" style="left:79px;top:593px;font-size:11.5px;line-height:14px;color:#222">Roughness Profile</div>
<div class="a" style="left:39px;top:617px;width:13px;height:13px;border:1px solid #8e8f8f;background:linear-gradient(135deg,#dcdfe3,#f6f7f8)"></div>
<svg class="a" style="left:39px;top:617px" width="13" height="13"><path d="M3.2,6.8 L5.3,9.6 L9.8,2.8" fill="none" stroke="#2a2f8c" stroke-width="1.7"/></svg>
<div class="a" style="left:56px;top:617px;width:16px;height:16px;background:#ff0000"></div>
<div class="t" style="left:79px;top:619px;font-size:11.5px;line-height:14px;color:#222">Waviness Profile</div>
<div class="a" style="left:39px;top:643px;width:13px;height:13px;border:1px solid #8e8f8f;background:linear-gradient(135deg,#dcdfe3,#f6f7f8)"></div>
<svg class="a" style="left:39px;top:643px" width="13" height="13"><path d="M3.2,6.8 L5.3,9.6 L9.8,2.8" fill="none" stroke="#2a2f8c" stroke-width="1.7"/></svg>
<div class="a" style="left:56px;top:643px;width:16px;height:16px;background:#000080"></div>
<div class="t" style="left:79px;top:645px;font-size:11.5px;line-height:14px;color:#222">Total Profile</div>
<div class="gb" style="left:526px;top:572px;width:569px;height:126px"></div>
<div class="gbt" style="left:531px;top:565px">Cursor Status</div>
<div class="cs csh" style="left:536px;top:585px;width:100px;height:27px;line-height:26px;padding-left:5px">Label</div>
<div class="cs csh" style="left:636px;top:585px;width:150px;height:27px;line-height:26px;padding-left:5px">Position (mm)</div>
<div class="cs csh" style="left:786px;top:585px;width:150px;height:27px;line-height:26px;padding-left:5px">Roughness Profile (&#197;)</div>
<div class="cs csh" style="left:936px;top:585px;width:149px;height:27px;line-height:26px;padding-left:5px">Width (mm)</div>
<div class="a" style="left:924px;top:597px;width:0;height:0;border-left:4px solid transparent;border-right:4px solid transparent;border-top:4px solid #222"></div>
<div class="cs csh" style="left:536px;top:612px;width:100px;height:26px;padding-left:5px;line-height:23px;">R</div>
<div class="cs" style="left:636px;top:612px;width:150px;height:26px;">0.0873</div>
<div class="cs" style="left:786px;top:612px;width:150px;height:26px;">-65.5416</div>
<div class="cs" style="left:936px;top:612px;width:149px;height:26px;">0.0000</div>
<div class="cs csh" style="left:536px;top:638px;width:100px;height:26px;padding-left:5px;line-height:23px;">M</div>
<div class="cs" style="left:636px;top:638px;width:150px;height:26px;">1.8922</div>
<div class="cs" style="left:786px;top:638px;width:150px;height:26px;">116.4752</div>
<div class="cs" style="left:936px;top:638px;width:149px;height:26px;">0.0000</div>
<div class="cs csh" style="left:536px;top:663px;width:100px;height:26px;padding-left:5px;line-height:23px;">&#916;</div>
<div class="cs" style="left:636px;top:663px;width:150px;height:26px;">1.8049</div>
<div class="cs" style="left:786px;top:663px;width:150px;height:26px;">182.0168</div>
<div class="gb" style="left:1117px;top:572px;width:118px;height:126px"></div>
<div class="gbt" style="left:1122px;top:565px">Cursor Control</div>
<div class="a" style="left:1160px;top:584px;width:32px;height:32px;border:1px solid #6b6b6b;border-radius:4px;background:linear-gradient(#fafafa,#d8d8d8)"></div><div class="a" style="left:1164px;top:588px;width:24px;height:24px;border-radius:3px;background:linear-gradient(180deg,#3f63d8 0%,#7f9ae8 18%,#9fb3ee 42%,#3556d2 46%,#2743c4 70%,#1b2fb2 100%);box-shadow:inset 0 0 1px #1a2a90"></div><svg class="a" style="left:1164px;top:588px" width="24" height="24" viewBox="0 0 24 24"><g transform="rotate(0 12 12)"><path d="M12,5 L12,19.6 M5.4,10.9 L12,4.4 L18.6,10.9" fill="none" stroke="#fff" stroke-width="3.5" stroke-linecap="round" stroke-linejoin="round"/></g></svg>
<div class="a" style="left:1128px;top:616px;width:32px;height:32px;border:1px solid #6b6b6b;border-radius:4px;background:linear-gradient(#fafafa,#d8d8d8)"></div><div class="a" style="left:1132px;top:620px;width:24px;height:24px;border-radius:3px;background:linear-gradient(90deg,#3f63d8 0%,#7f9ae8 18%,#9fb3ee 42%,#3556d2 46%,#2743c4 70%,#1b2fb2 100%);box-shadow:inset 0 0 1px #1a2a90"></div><svg class="a" style="left:1132px;top:620px" width="24" height="24" viewBox="0 0 24 24"><g transform="rotate(-90 12 12)"><path d="M12,5 L12,19.6 M5.4,10.9 L12,4.4 L18.6,10.9" fill="none" stroke="#fff" stroke-width="3.5" stroke-linecap="round" stroke-linejoin="round"/></g></svg>
<div class="a" style="left:1192px;top:616px;width:32px;height:32px;border:1px solid #6b6b6b;border-radius:4px;background:linear-gradient(#fafafa,#d8d8d8)"></div><div class="a" style="left:1196px;top:620px;width:24px;height:24px;border-radius:3px;background:linear-gradient(270deg,#3f63d8 0%,#7f9ae8 18%,#9fb3ee 42%,#3556d2 46%,#2743c4 70%,#1b2fb2 100%);box-shadow:inset 0 0 1px #1a2a90"></div><svg class="a" style="left:1196px;top:620px" width="24" height="24" viewBox="0 0 24 24"><g transform="rotate(90 12 12)"><path d="M12,5 L12,19.6 M5.4,10.9 L12,4.4 L18.6,10.9" fill="none" stroke="#fff" stroke-width="3.5" stroke-linecap="round" stroke-linejoin="round"/></g></svg>
<div class="a" style="left:1160px;top:648px;width:32px;height:32px;border:1px solid #6b6b6b;border-radius:4px;background:linear-gradient(#fafafa,#d8d8d8)"></div><div class="a" style="left:1164px;top:652px;width:24px;height:24px;border-radius:3px;background:linear-gradient(360deg,#3f63d8 0%,#7f9ae8 18%,#9fb3ee 42%,#3556d2 46%,#2743c4 70%,#1b2fb2 100%);box-shadow:inset 0 0 1px #1a2a90"></div><svg class="a" style="left:1164px;top:652px" width="24" height="24" viewBox="0 0 24 24"><g transform="rotate(180 12 12)"><path d="M12,5 L12,19.6 M5.4,10.9 L12,4.4 L18.6,10.9" fill="none" stroke="#fff" stroke-width="3.5" stroke-linecap="round" stroke-linejoin="round"/></g></svg>
<div class="a" style="left:1161px;top:617px;width:30px;height:30px;background:#c4e0fa;border:1px solid #aecde8"></div>
<div class="t" style="left:1161px;top:620px;width:30px;text-align:center;font-weight:bold;font-size:21px;line-height:24px;color:#000">F</div>
<div class="a" style="left:1129px;top:649px;width:30px;height:30px;background:#c4e0fa;border:1px solid #aecde8"></div>
<div class="t" style="left:1129px;top:653px;width:30px;text-align:center;font-weight:bold;font-size:22px;line-height:24px;color:#f00">R</div>
<div class="a" style="left:1193px;top:649px;width:31px;height:30px;background:linear-gradient(#fdd49c,#fbb458 50%,#f98a00);border:1px solid #e9c594"></div>
<div class="t" style="left:1193px;top:653px;width:31px;text-align:center;font-weight:bold;font-size:22px;line-height:24px;color:#2e6a2a">M</div>
</body></html>
